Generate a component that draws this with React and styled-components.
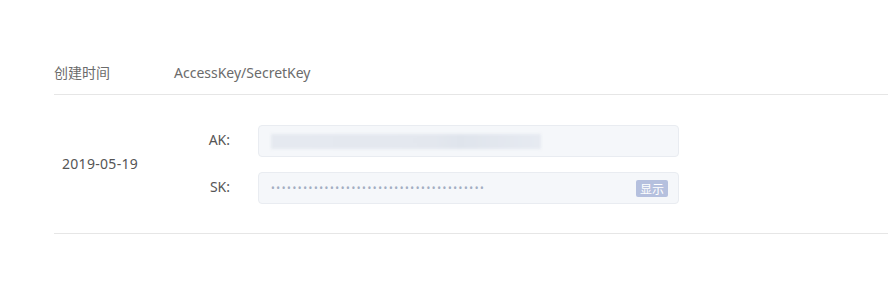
import React from "react";
import styled, { createGlobalStyle } from "styled-components";

const Global = createGlobalStyle`
  html, body { margin: 0; padding: 0; background: #fff; }
  body { font-family: "Noto Sans", "Noto Sans CJK SC", sans-serif; }
`;

const Page = styled.div`
  width: 888px;
  height: 302px;
  padding: 52px 0 0 54px;
  box-sizing: border-box;
`;

const Table = styled.div`
  display: flex;
  flex-direction: column;
`;

const HeadRow = styled.div`
  display: flex;
  align-items: center;
  height: 42px;
  border-bottom: 1px solid #e6e6e6;
`;

const HeadCell = styled.div`
  width: ${(p) => p.$w || "auto"};
  font-size: 14px;
  color: #6b6b6b;
  line-height: 20px;
`;

const BodyRow = styled.div`
  display: flex;
  align-items: center;
  padding: 30px 0 29px;
  border-bottom: 1px solid #e6e6e6;
`;

const DateCell = styled.div`
  width: 112px;
  padding-left: 8px;
  font-size: 14px;
  letter-spacing: 0.3px;
  color: #555;
  margin-top: -3px;
`;

const KeyList = styled.div`
  display: flex;
  flex-direction: column;
  gap: 15px;
`;

const KeyLine = styled.div`
  display: flex;
  align-items: center;
`;

const Label = styled.div`
  width: 56px;
  text-align: right;
  font-size: 14px;
  color: #555;
  margin-right: 28px;
  margin-top: -3px;
`;

const Field = styled.div`
  position: relative;
  width: 421px;
  height: 32px;
  box-sizing: border-box;
  background: #f5f7fa;
  border: 1px solid #e9ecf1;
  border-radius: 4px;
  display: flex;
  align-items: center;
  padding: 0 10px 0 12px;
`;

const Blurred = styled.div`
  width: 270px;
  height: 15px;
  background: linear-gradient(90deg, #e5e9f0 0%, #e3e7ee 60%, #dfe4ec 70%, #e6eaf1 100%);
  filter: blur(1.5px);
`;

const Dots = styled.div`
  flex: 1;
  font-size: 10px;
  letter-spacing: 1.6px;
  color: #a3aec2;
  line-height: 14px;
  white-space: nowrap;
  margin-top: -1px;
`;

const ShowButton = styled.button`
  width: 32px;
  height: 17px;
  padding: 0;
  border: none;
  border-radius: 2px;
  background: #b5c0de;
  color: #fff;
  font-family: "Noto Sans CJK SC", sans-serif;
  font-size: 12px;
  line-height: 17px;
  cursor: pointer;
`;

export default function App() {
  return (
    <>
      <Global />
      <Page>
        <Table>
          <HeadRow>
            <HeadCell $w="120px">创建时间</HeadCell>
            <HeadCell>AccessKey/SecretKey</HeadCell>
          </HeadRow>
          <BodyRow>
            <DateCell>2019-05-19</DateCell>
            <KeyList>
              <KeyLine>
                <Label>AK:</Label>
                <Field>
                  <Blurred />
                </Field>
              </KeyLine>
              <KeyLine>
                <Label>SK:</Label>
                <Field>
                  <Dots>{"•".repeat(40)}</Dots>
                  <ShowButton>显示</ShowButton>
                </Field>
              </KeyLine>
            </KeyList>
          </BodyRow>
        </Table>
      </Page>
    </>
  );
}
